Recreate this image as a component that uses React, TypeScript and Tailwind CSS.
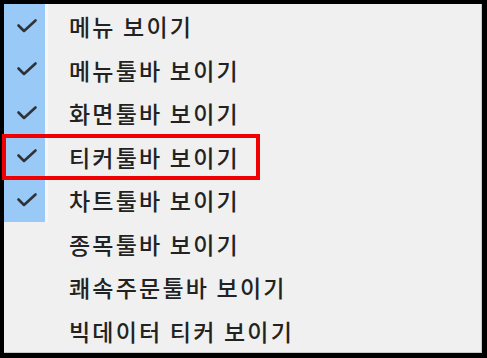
import React from 'react';

const items = [
  { label: '메뉴 보이기', checked: true },
  { label: '메뉴툴바 보이기', checked: true },
  { label: '화면툴바 보이기', checked: true },
  { label: '티커툴바 보이기', checked: true },
  { label: '차트툴바 보이기', checked: true },
  { label: '종목툴바 보이기', checked: false },
  { label: '쾌속주문툴바 보이기', checked: false },
  { label: '빅데이터 티커 보이기', checked: false },
];

const Check = () => (
  <svg width="22" height="16" viewBox="0 0 22 16" fill="none" className="ml-[4px]">
    <path d="M2.5 7.5 L8 13 L19.5 2.5" stroke="#2f3338" strokeWidth="2.6" strokeLinecap="round" strokeLinejoin="round" />
  </svg>
);

export default function App() {
  return (
    <div className="w-[487px] h-[358px] bg-black pt-[4px] pl-[4px] pr-[5px] pb-[5px]">
      <div className="relative w-full h-full bg-[#f0f0f0] border-r border-b border-[#c8c8c8] flex flex-col">
        {items.map((item) => (
          <div key={item.label} className="flex h-[43.6px] items-stretch">
            <div
              className={
                item.checked
                  ? 'w-[44px] bg-[#99c9f6] border-r-[3px] border-[#f6f6f6] flex items-center justify-center shrink-0'
                  : 'w-[44px] flex items-center justify-center shrink-0'
              }
            >
              {item.checked && <Check />}
            </div>
            <div
              className="flex items-center pl-[21px] pt-[1px] text-[23px] tracking-[2.2px] text-[#222222] font-medium"
              style={{ fontFamily: '"Noto Sans CJK KR", "Noto Sans", sans-serif' }}
            >
              {item.label}
            </div>
          </div>
        ))}
        <div className="absolute left-[-2px] top-[130px] w-[258px] h-[46px] border-[4.5px] border-[#f00000]" />
      </div>
    </div>
  );
}
